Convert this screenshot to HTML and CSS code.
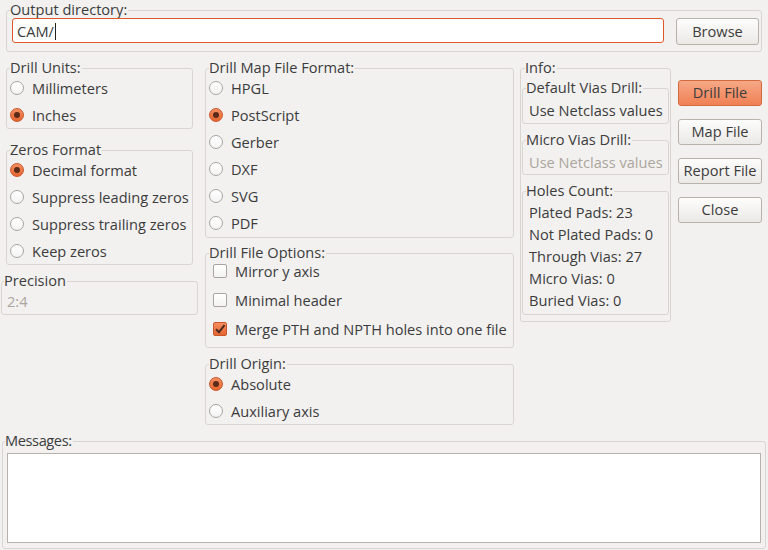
FILE: index.html
```html
<!DOCTYPE html>
<html>
<head>
<meta charset="utf-8">
<link rel="stylesheet" href="styles.css">
</head>
<body>
<div class="dialog">
  <div class="group outdir">
    <div class="glabel">Output directory:</div>
    <div class="outrow">
      <div class="input">CAM/<span class="caret"></span></div>
      <div class="btn browse">Browse</div>
    </div>
  </div>

  <div class="main">
    <div class="col col1">
      <div class="group units">
        <div class="glabel">Drill Units:</div>
        <div class="radios">
          <div class="opt"><span class="radio"></span>Millimeters</div>
          <div class="opt"><span class="radio on"></span>Inches</div>
        </div>
      </div>
      <div class="group zeros">
        <div class="glabel">Zeros Format</div>
        <div class="radios">
          <div class="opt"><span class="radio on"></span>Decimal format</div>
          <div class="opt"><span class="radio"></span>Suppress leading zeros</div>
          <div class="opt"><span class="radio"></span>Suppress trailing zeros</div>
          <div class="opt"><span class="radio"></span>Keep zeros</div>
        </div>
      </div>
      <div class="group precision">
        <div class="glabel">Precision</div>
        <div class="pval">2:4</div>
      </div>
    </div>

    <div class="col col2">
      <div class="group mapfmt">
        <div class="glabel">Drill Map File Format:</div>
        <div class="radios">
          <div class="opt"><span class="radio"></span>HPGL</div>
          <div class="opt"><span class="radio on"></span>PostScript</div>
          <div class="opt"><span class="radio"></span>Gerber</div>
          <div class="opt"><span class="radio"></span>DXF</div>
          <div class="opt"><span class="radio"></span>SVG</div>
          <div class="opt"><span class="radio"></span>PDF</div>
        </div>
      </div>
      <div class="group options">
        <div class="glabel">Drill File Options:</div>
        <div class="checks">
          <div class="copt"><span class="check"></span>Mirror y axis</div>
          <div class="copt"><span class="check"></span>Minimal header</div>
          <div class="copt"><span class="check on"><svg viewBox="0 0 14 14" width="14" height="14"><path d="M3 7.2 L6 10.2 L11.5 3.2" fill="none" stroke="#4a2a1e" stroke-width="2"/></svg></span>Merge PTH and NPTH holes into one file</div>
        </div>
      </div>
      <div class="group origin">
        <div class="glabel">Drill Origin:</div>
        <div class="radios">
          <div class="opt"><span class="radio on"></span>Absolute</div>
          <div class="opt"><span class="radio"></span>Auxiliary axis</div>
        </div>
      </div>
    </div>

    <div class="col col3">
      <div class="group info">
        <div class="glabel">Info:</div>
        <div class="group sub defvias">
          <div class="glabel">Default Vias Drill:</div>
          <div class="line">Use Netclass values</div>
        </div>
        <div class="group sub microvias">
          <div class="glabel">Micro Vias Drill:</div>
          <div class="line disabled">Use Netclass values</div>
        </div>
        <div class="group sub holes">
          <div class="glabel">Holes Count:</div>
          <div class="lines">
            <div class="line">Plated Pads: 23</div>
            <div class="line">Not Plated Pads: 0</div>
            <div class="line">Through Vias: 27</div>
            <div class="line">Micro Vias: 0</div>
            <div class="line">Buried Vias: 0</div>
          </div>
        </div>
      </div>
    </div>

    <div class="col col4">
      <div class="btn primary">Drill File</div>
      <div class="btn">Map File</div>
      <div class="btn">Report File</div>
      <div class="btn">Close</div>
    </div>
  </div>

  <div class="group messages">
    <div class="glabel msglabel">Messages:</div>
    <div class="msgarea"></div>
  </div>
</div>
</body>
</html>
```

FILE: styles.css
```css
* { box-sizing: border-box; }
html, body {
  margin: 0;
  padding: 0;
  background: #f2f1f0;
}
body {
  font-family: "Open Sans", "DejaVu Sans", sans-serif;
  font-size: 14.6px;
  color: #3c3c3c;
  width: 768px;
  height: 550px;
  overflow: hidden;
}
.dialog {
  padding-top: 10px;
}
.group {
  border: 1px solid #d9d5d0;
  border-radius: 3px;
}
.glabel {
  width: fit-content;
  height: 17px;
  line-height: 17px;
  margin: -10px 0 0 3px;
  padding-bottom: 1px;
  box-sizing: content-box;
  background: #f2f1f0;
  padding-right: 1px;
  white-space: nowrap;
}

/* output directory */
.outdir {
  margin: 0 6px;
  height: 42px;
}
.outrow {
  display: flex;
  align-items: flex-start;
  margin-top: -1px;
  padding-left: 5px;
}
.input {
  width: 652px;
  height: 25px;
  background: #fff;
  border: 1px solid #e0582a;
  border-radius: 3px;
  padding-left: 4px;
  padding-top: 1px;
  display: flex;
  align-items: center;
}
.caret {
  display: inline-block;
  width: 1px;
  height: 17px;
  background: #222;
  margin-left: 1px;
}
.btn {
  height: 26px;
  border: 1px solid #b9b2ab;
  border-radius: 3px;
  background: linear-gradient(#fdfdfc, #ebe9e6);
  text-align: center;
  line-height: 23px;
  white-space: nowrap;
}
.browse {
  width: 83px;
  height: 27px;
  line-height: 24px;
  margin-left: 12px;
}

/* main row */
.main {
  display: flex;
  align-items: flex-start;
  margin-top: 16px;
  padding-left: 1px;
}
.col { display: flex; flex-direction: column; }
.col1 { width: 197px; }
.col2 { width: 309px; margin-left: 7px; }
.col3 { width: 151px; margin-left: 6px; }
.col4 { width: 84px; margin-left: 7px; padding-top: 12px; gap: 13px; }

.units { margin: 0 5px; height: 61px; }
.zeros { margin: 21px 5px 0; height: 115px; }
.precision { margin-top: 16px; height: 34px; }
.precision .glabel { margin-left: 2px; }
.mapfmt { height: 170px; }
.options { margin-top: 15px; height: 95px; }
.origin { margin-top: 16px; height: 61px; }
.info { height: 254px; padding: 0 0 0 1px; }
.sub { margin-right: 1px; }
.defvias { margin-top: 11px; height: 36px; }
.microvias { margin-top: 16px; height: 35px; }
.holes { margin-top: 16px; height: 124px; }
.messages { margin: 16px 2px 0 2px; height: 108px; }
.msglabel { margin-left: 2px; letter-spacing: -0.4px; }

.radios { display: flex; flex-direction: column; gap: 5px; padding-left: 3px; }
.opt {
  display: flex;
  align-items: center;
  height: 22px;
  white-space: nowrap;
}
.radio {
  width: 14px;
  height: 14px;
  border-radius: 50%;
  border: 1px solid #a9a49f;
  background: linear-gradient(#ffffff, #f4f3f2);
  margin-right: 8px;
  flex: none;
  display: flex;
  align-items: center;
  justify-content: center;
}
.radio.on {
  border-color: #c9572b;
  background: linear-gradient(#f58e62, #e6652f);
}
.radio.on::after {
  content: "";
  width: 6px;
  height: 6px;
  border-radius: 50%;
  background: #5b2a18;
}

.checks { display: flex; flex-direction: column; gap: 11px; padding-left: 7px; }
.copt {
  display: flex;
  align-items: center;
  height: 18px;
  white-space: nowrap;
}
.check {
  width: 14px;
  height: 14px;
  border: 1px solid #a9a49f;
  border-radius: 2px;
  background: linear-gradient(#ffffff, #f4f3f2);
  margin-right: 8px;
  flex: none;
  display: flex;
  align-items: center;
  justify-content: center;
}
.check.on {
  border-color: #c9572b;
  background: linear-gradient(#f58e62, #e6652f);
}
.check svg { display: block; margin: -1px; }

.pval {
  height: 22px;
  line-height: 22px;
  padding-left: 5px;
  color: #aca59d;
}
.line {
  height: 22px;
  line-height: 22px;
  padding-left: 6px;
  white-space: nowrap;
}
.defvias .line, .microvias .line { margin-top: 2px; }
.lines { padding-top: 1px; }
.line.disabled { color: #aca59d; }

.primary {
  border-color: #d26a40;
  background: linear-gradient(#f7a886, #f08054);
}

.msgarea {
  margin: 3px 4px 0 4px;
  height: 90px;
  background: #fff;
  border: 1px solid #b8b2ab;
}
```
